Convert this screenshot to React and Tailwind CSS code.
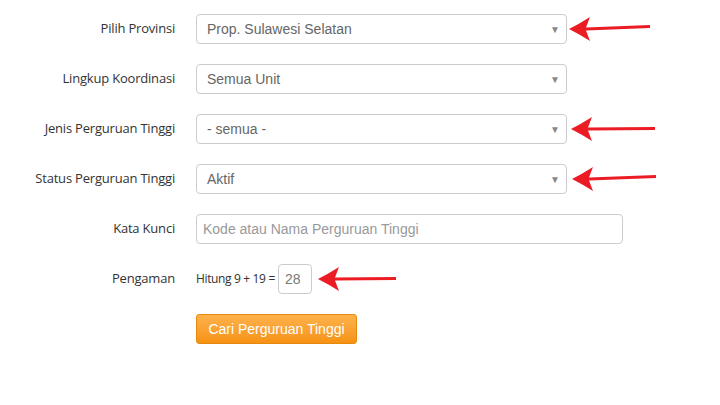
import { useState } from 'react';

const selects = [
  { label: 'Pilih Provinsi', value: 'Prop. Sulawesi Selatan', arrow: 'ml-px' },
  { label: 'Lingkup Koordinasi', value: 'Semua Unit' },
  { label: 'Jenis Perguruan Tinggi', value: '- semua -', arrow: 'ml-[3px]' },
  { label: 'Status Perguruan Tinggi', value: 'Aktif', arrow: 'ml-[4px]' },
];

function Arrow({ className = '', length = 84, rise = 0 }) {
  const w = length;
  return (
    <svg width={w} height="26" viewBox={`0 0 ${w} 26`} className={className}>
      <path
        d={`M1 13 Q11 8 22 1 L18 11.5 L${w - 1} ${11 - rise} L${w - 1} ${14 - rise} L18 14.5 L22 25 Q11 18 1 13 Z`}
        fill="#ec1c24"
      />
    </svg>
  );
}

function Label({ children }) {
  return (
    <div className="w-[175px] shrink-0 text-right text-[13px] tracking-[-0.2px] text-[#333] font-['Open_Sans',sans-serif]">
      {children}
    </div>
  );
}

export default function App() {
  const [keyword, setKeyword] = useState('');

  return (
    <div className="w-[720px] h-[405px] bg-white font-['Liberation_Sans',Arial,sans-serif] pt-[14px]">
      <div className="flex flex-col gap-5">
        {/* Dropdowns */}
        {selects.map((s, i) => (
          <div key={s.label} className="flex items-center h-[30px]">
            <Label>{s.label}</Label>
            <div className="ml-[21px] w-[371px] h-[30px] border border-[#ccc] rounded-[4px] flex items-center justify-between pl-[10px] pr-[6px] text-[14px] text-[#666]">
              <span>{s.value}</span>
              <span className="text-[10px] text-[#888]">▼</span>
            </div>
            {s.arrow && <Arrow className={s.arrow} length={i === 0 ? 83 : 86} rise={i === 0 || i === 3 ? 2 : 0} />}
          </div>
        ))}

        {/* Keyword */}
        <div className="flex items-center h-[30px]">
          <Label>Kata Kunci</Label>
          <input
            value={keyword}
            onChange={(e) => setKeyword(e.target.value)}
            placeholder="Kode atau Nama Perguruan Tinggi"
            className="ml-[21px] w-[427px] h-[30px] border border-[#ccc] rounded-[4px] px-[6px] text-[14px] text-[#666] placeholder:text-[#999] outline-none"
          />
        </div>

        {/* Captcha */}
        <div className="flex items-center h-[30px]">
          <Label>Pengaman</Label>
          <span className="ml-[21px] text-[12px] tracking-[-0.35px] text-[#333] font-['Open_Sans',sans-serif]">Hitung 9 + 19 =</span>
          <div className="ml-[3px] w-[34px] h-[30px] border border-[#ccc] rounded-[4px] flex items-center pl-[6px] text-[14px] text-[#777]">
            28
          </div>
          <Arrow className="ml-[5px]" length={80} />
        </div>

        {/* Submit */}
        <div className="flex items-center h-[30px]">
          <div className="w-[175px] shrink-0" />
          <button className="ml-[21px] w-[161px] h-[30px] rounded-[3px] border border-[#e58a0f] bg-gradient-to-b from-[#fdb24a] to-[#f7920f] text-white text-[14px]">
            Cari Perguruan Tinggi
          </button>
        </div>
      </div>
    </div>
  );
}
